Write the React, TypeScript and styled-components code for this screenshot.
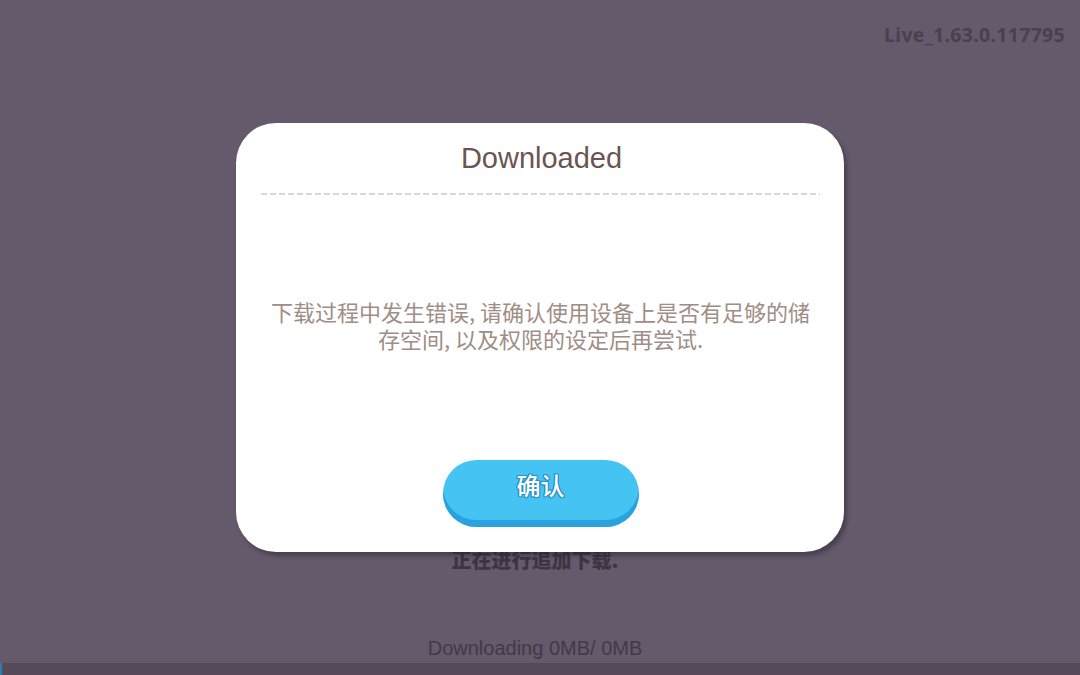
import styled, { createGlobalStyle } from 'styled-components'

const GlobalStyle = createGlobalStyle`
	html, body {
		margin: 0;
		padding: 0;
		width: 100%;
		height: 100%;
		overflow: hidden;
	}
	body {
		font-family: "Noto Sans", "Noto Sans CJK SC", sans-serif;
		background: #645a6b;
	}
	#root {
		height: 100%;
	}
`

const Screen = styled.div`
	position: relative;
	display: flex;
	flex-direction: column;
	width: 1080px;
	height: 675px;
	background: #645a6b;
`

const TopBar = styled.div`
	display: flex;
	justify-content: flex-end;
	padding: 20px 15px 0 0;
	height: 30px;
`

const Version = styled.div`
	font-family: "Noto Sans", sans-serif;
	font-weight: 700;
	font-size: 19.5px;
	line-height: 30px;
	color: #4a404f;
	letter-spacing: 0.3px;
`

const Spacer = styled.div`
	flex: 1;
`

const Status = styled.div`
	text-align: center;
	font-family: "Noto Sans CJK SC", sans-serif;
	font-weight: 900;
	font-size: 20px;
	line-height: 24px;
	color: #3f3441;
	padding-right: 10px;
	margin-bottom: 64px;
`

const Progress = styled.div`
	text-align: center;
	font-family: "Liberation Sans Narrow", "Liberation Sans", sans-serif;
	font-size: 20px;
	line-height: 24px;
	color: #43384a;
	padding-right: 10px;
	margin-bottom: 3px;
`

const Track = styled.div`
	height: 12px;
	background: #564a58;
	display: flex;
`

const Fill = styled.div`
	width: 2px;
	background: #2a7fb0;
`

const Overlay = styled.div`
	position: absolute;
	inset: 0;
	display: flex;
	align-items: center;
	justify-content: center;
`

const Dialog = styled.div`
	width: 608px;
	height: 429px;
	box-sizing: border-box;
	background: #ffffff;
	border-radius: 40px;
	box-shadow: 3px 4px 4px rgba(40, 30, 45, 0.45);
	display: flex;
	flex-direction: column;
	align-items: center;
	padding: 15px 24px 0 25px;
`

const Title = styled.div`
	font-family: "Liberation Sans", Arial, sans-serif;
	font-size: 29px;
	line-height: 40px;
	color: #6b5452;
	padding-left: 2px;
`

const Divider = styled.div`
	align-self: stretch;
	margin-top: 15px;
	height: 2px;
	background: repeating-linear-gradient(90deg, #dcd6d0 0 6px, transparent 6px 9px);
`

const Message = styled.div`
	margin-top: 103px;
	width: 545px;
	text-align: center;
	font-family: "Noto Sans CJK SC", sans-serif;
	font-size: 22px;
	line-height: 27px;
	color: #a08d85;
`

const Button = styled.button`
	margin-top: 108px;
	width: 196px;
	height: 67px;
	border: none;
	border-radius: 34px;
	background: #45c3f3;
	box-shadow: inset 0 -7px 0 #2aa2dd;
	padding: 0 0 19px 0;
	font-family: "Noto Sans CJK SC", sans-serif;
	font-size: 24px;
	font-weight: 500;
	color: #ffffff;
	text-shadow:
		1px 1px 0 #2a8fc6, -1px 1px 0 #2a8fc6,
		1px -1px 0 #2a8fc6, -1px -1px 0 #2a8fc6,
		0 1px 0 #2a8fc6, 0 -1px 0 #2a8fc6,
		1px 0 0 #2a8fc6, -1px 0 0 #2a8fc6;
	cursor: pointer;
`

export default function App() {
	return <>
		<GlobalStyle />
		<Screen>
			<TopBar>
				<Version>Live_1.63.0.117795</Version>
			</TopBar>
			<Spacer />
			<Status>正在进行追加下载.</Status>
			<Progress>Downloading 0MB/ 0MB</Progress>
			<Track><Fill /></Track>
			<Overlay>
				<Dialog>
					<Title>Downloaded</Title>
					<Divider />
					<Message>下载过程中发生错误, 请确认使用设备上是否有足够的储存空间, 以及权限的设定后再尝试.</Message>
					<Button>确认</Button>
				</Dialog>
			</Overlay>
		</Screen>
	</>
}
